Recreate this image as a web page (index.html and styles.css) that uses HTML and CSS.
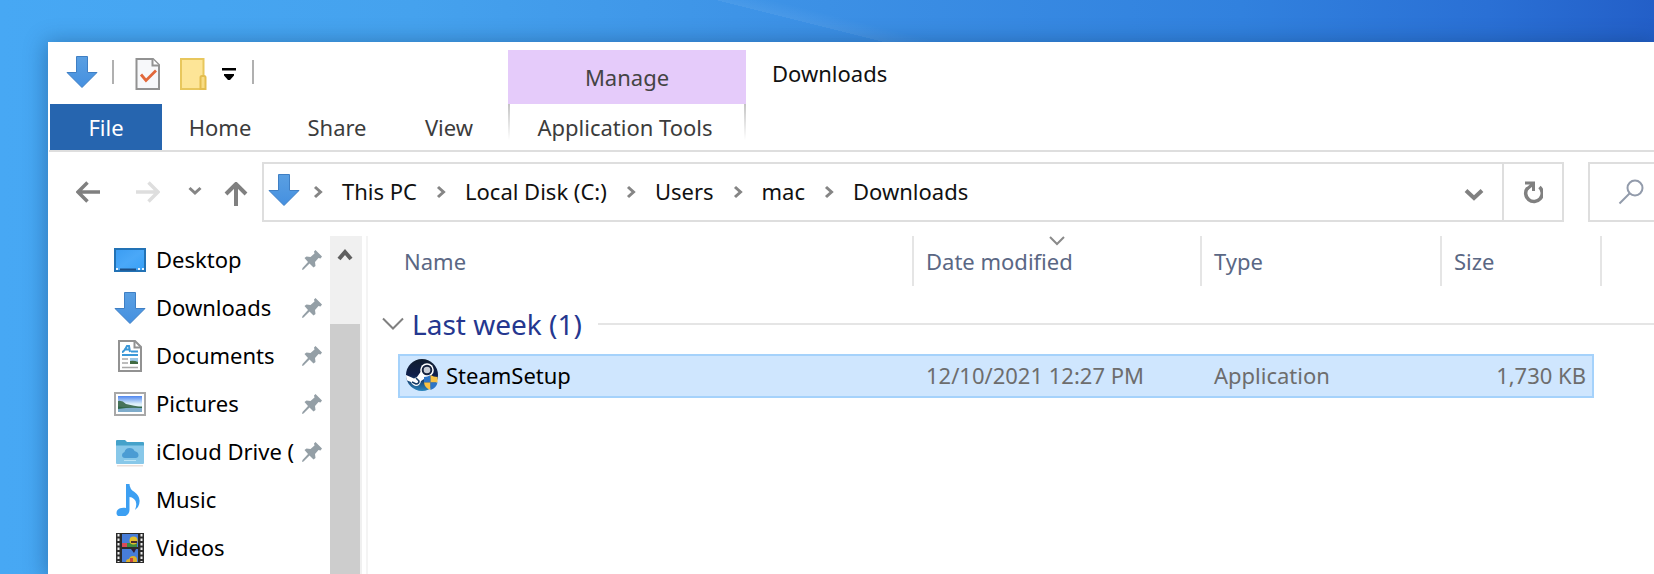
FILE: index.html
```html
<!DOCTYPE html>
<html lang="en">
<head>
<meta charset="utf-8">
<title>Downloads</title>
<link rel="stylesheet" href="styles.css">
</head>
<body>
<svg class="defs" aria-hidden="true">
  <defs>
    <linearGradient id="blue" x1="0" y1="0" x2="0" y2="1"><stop offset="0" stop-color="#5a9fe2"/><stop offset="1" stop-color="#4590e0"/></linearGradient>
    <linearGradient id="screen" x1="0" y1="0" x2="1" y2="1"><stop offset="0" stop-color="#3a9cf2"/><stop offset=".5" stop-color="#4aa8f8"/><stop offset="1" stop-color="#36a0f6"/></linearGradient>
    <linearGradient id="steam" x1="0" y1="0" x2="0" y2="1"><stop offset="0" stop-color="#111d2e"/><stop offset=".5" stop-color="#0f1f4b"/><stop offset="1" stop-color="#2a86bd"/></linearGradient>
    <linearGradient id="sky" x1="0" y1="0" x2="0" y2="1"><stop offset="0" stop-color="#4f86ee"/><stop offset=".5" stop-color="#dff1fb"/></linearGradient>
    <symbol id="down" viewBox="0 0 32 32"><path d="M10.500 .5h11v16h9.500L16 31.500 1 16.500h9.500z" fill="url(#blue)" stroke="#3f7fc4"/></symbol>
    <symbol id="crumb" viewBox="0 0 10 14"><path d="M2 2 7.500 7 2 12" fill="none" stroke="#858585" stroke-width="3"/></symbol>
    <symbol id="pin" viewBox="0 0 22 22"><path d="M14.500 1 21 7.500 19.500 9.500 17.500 9 14 13 14.500 17 12.500 18.500 8.500 14.500 2.500 20.500 1 21 1.500 19 7 13 3.500 9 5.500 7.500 9.500 8 13.500 4.500 13 2.500z" fill="#949fa6"/></symbol>
  </defs>
</svg>
<main class="window">
  <header class="titlebar">
    <div class="ribbon">
      <div class="quick">
        <svg class="icon" viewBox="0 0 32 32"><use href="#down"/></svg>
        <span class="bar"></span>
        <button class="tool" aria-label="Properties"><svg width="26" height="34" viewBox="0 0 26 34"><path d="M1.500 2H18l6 6v24h-22.500z" fill="#f7f8fa" stroke="#929292" stroke-width="2"/><path d="M17.500 2v6.500H24" fill="#fff" stroke="#929292" stroke-width="2"/><path d="m6 17.500 5 6 10-10" fill="none" stroke="#e2683a" stroke-width="2.800"/></svg></button>
        <button class="tool" aria-label="New folder"><svg width="28" height="34" viewBox="0 0 28 34"><path d="M2 2h22.500v30H2z" fill="#fde597" stroke="#e8c75d" stroke-width="2"/><path d="M21.500 32v-11.500q0-1.500 1.500-1.500h2q1.500 0 1.500 1.500v11.500z" fill="#f8dc83" stroke="#e3bd4f" stroke-width="2"/></svg></button>
        <button class="tool more" aria-label="Customize toolbar"><svg width="14" height="12" viewBox="0 0 14 12"><path d="M0 0h14v2.500H0zM2 6h10v1.500L8 12H6L2 7.500z" fill="#000"/></svg></button>
        <span class="bar"></span>
      </div>
      <nav class="tabs">
        <button class="tab file">File</button>
        <button class="tab">Home</button>
        <button class="tab">Share</button>
        <button class="tab">View</button>
      </nav>
    </div>
    <div class="context">
      <div class="manage">Manage</div>
      <button class="tab tools">Application Tools</button>
    </div>
    <h1 class="title">Downloads</h1>
  </header>

  <div class="navbar">
    <div class="history">
      <button class="tool" aria-label="Back"><svg width="24" height="22" viewBox="0 0 24 22"><path d="M24 11H2M11.500 1.500 2 11l9.500 9.500" fill="none" stroke="#808080" stroke-width="3.500"/></svg></button>
      <button class="tool" aria-label="Forward"><svg width="24" height="22" viewBox="0 0 24 22"><path d="M0 11h22M12.500 1.500 22 11l-9.500 9.500" fill="none" stroke="#dedede" stroke-width="3.500"/></svg></button>
      <button class="tool" aria-label="Recent locations"><svg width="14" height="22" viewBox="0 0 14 22"><path d="m1.500 7 5.500 5 5.500-5" fill="none" stroke="#858585" stroke-width="3"/></svg></button>
      <button class="tool" aria-label="Up"><svg width="24" height="24" viewBox="0 0 24 24"><path d="M12 24V2M2 12 12 2l10 10" fill="none" stroke="#808080" stroke-width="4"/></svg></button>
    </div>
    <div class="address">
      <svg class="icon" viewBox="0 0 32 32"><use href="#down"/></svg>
      <nav class="crumbs">
        <svg class="sep"><use href="#crumb"/></svg><a href="#">This PC</a>
        <svg class="sep"><use href="#crumb"/></svg><a href="#">Local Disk (C:)</a>
        <svg class="sep"><use href="#crumb"/></svg><a href="#">Users</a>
        <svg class="sep"><use href="#crumb"/></svg><a href="#">mac</a>
        <svg class="sep"><use href="#crumb"/></svg><a href="#">Downloads</a>
      </nav>
      <button class="tool drop" aria-label="Previous locations"><svg width="20" height="14" viewBox="0 0 20 14"><path d="m2 3.500 8 7.500 8-7.500" fill="none" stroke="#808080" stroke-width="4"/></svg></button>
      <button class="tool refresh" aria-label="Refresh"><svg width="20" height="24" viewBox="0 0 20 24"><path d="M16.500 7a8.300 8.300 0 1 1-12 1" fill="none" stroke="#808080" stroke-width="3.500"/><path d="M2 3H10.500V11M10 4 4 9" fill="none" stroke="#808080" stroke-width="3"/></svg></button>
    </div>
    <label class="search"><svg width="26" height="26" viewBox="0 0 26 26"><circle cx="17" cy="9" r="7.500" fill="none" stroke="#929bab" stroke-width="2"/><path d="M11.500 14.500 1.500 24.500" stroke="#929bab" stroke-width="2"/></svg><input type="text" aria-label="Search Downloads"></label>
  </div>

  <div class="body">
    <aside class="sidebar">
      <ul class="places">
        <li><svg class="icon" viewBox="0 0 32 32"><path d="M1 5h30v22H1z" fill="url(#screen)" stroke="#2272b5" stroke-width="2"/><path d="M6 24.500h16v2H6z" fill="#1e4f85"/><path d="M2 24h2v2H2zM24 24h2v2h-2zM28 24h2v2h-2z" fill="#e8f5ff"/></svg><a href="#">Desktop</a><svg class="pin"><use href="#pin"/></svg></li>
        <li><svg class="icon" viewBox="0 0 32 32"><use href="#down"/></svg><a href="#">Downloads</a><svg class="pin"><use href="#pin"/></svg></li>
        <li><svg class="icon" viewBox="0 0 32 32"><path d="M5 1h16l6 6v24H5z" fill="#fff" stroke="#929292" stroke-width="2"/><path d="M20.500 1v6.500H27" fill="none" stroke="#929292" stroke-width="2"/><path d="M8 12q2 0 5-6h2l1 6M10 9.500h5M17 11.500h7M8 15h16" fill="none" stroke="#3b98d8" stroke-width="2"/><path d="M8 19h6M8 23h6M8 27.500h16" stroke="#a8a8a8" stroke-width="1.500"/><path d="M16 18h8v6h-8z" fill="#9ac6e5"/><path d="M16 21q4-1 8 1v2h-8z" fill="#416b42"/></svg><a href="#">Documents</a><svg class="pin"><use href="#pin"/></svg></li>
        <li><svg class="icon" viewBox="0 0 32 32"><path d="M1 5h30v22H1z" fill="#fff" stroke="#a8a8a8" stroke-width="2"/><path d="M4 8h24v16H4z" fill="url(#sky)"/><path d="M4 13q4-1 8 3 8 2 16 3v1H4z" fill="#47735a"/><path d="M4 18.500q12 2 24 0V21H4z" fill="#2f6648"/><path d="M4 21q12-2 24-1v4H4z" fill="#7faccb"/></svg><a href="#">Pictures</a><svg class="pin"><use href="#pin"/></svg></li>
        <li><svg class="icon" viewBox="0 0 32 32"><path d="M3 29h26v1.500H3z" fill="#eadfda"/><path d="M2 5q0-1 1-1h8l2 2h16q1 0 1 1v7H2z" fill="#45a2ca"/><path d="M2 9.500h28V27q0 1-1 1H3q-1 0-1-1z" fill="#88c8e9"/><path d="M11 22q-3 0-3-3 0-2 2.500-3 1-4 5-4 4 0 5 3 4 1 4 4 0 3-3 3z" fill="#4b9cd3"/><path d="M10 24.500h12" stroke="#bce4f5"/></svg><a href="#">iCloud Drive (</a><svg class="pin"><use href="#pin"/></svg></li>
        <li><svg class="icon" viewBox="0 0 32 32"><path d="M12 0h3.500q0 5 5 8 8 6 3.500 15l-3 3q3-8-1-11-2-2-4.500-2v13c0 8-13 9-13 3 0-5 6-6 9.500-5z" fill="#3c9ff2"/></svg><a href="#">Music</a></li>
        <li><svg class="icon" viewBox="0 0 32 32"><path d="M2 1h28v30H2z" fill="#2c2c2c"/><path d="M8 2h16v13H8zM8 17h16v13H8z" fill="#477dd9"/><path d="M8 11h5l2 4H8z" fill="#d94b58"/><path d="M13 11h10v4H13z" fill="#3d8b3e"/><circle cx="19.500" cy="8.500" r="4" fill="#e2be2c"/><path d="M17 9h6v2h-6z" fill="#472c2f"/><path d="M17 17h5l-2 4z" fill="#331d35"/><path d="M12 30q0-3 3-3 1-3 4-3 4 0 4 4v2z" fill="#ddb02b"/><path d="M16 26h3v4h-3z" fill="#c84641"/><path d="M4.500 2v28M27.500 2v28" stroke="#eee" stroke-width="2" stroke-dasharray="2.500 2"/></svg><a href="#">Videos</a></li>
      </ul>
      <div class="scroll">
        <button class="tool up" aria-label="Scroll up"><svg width="16" height="14" viewBox="0 0 16 14"><path d="m2 12 6-7 6 7" fill="none" stroke="#606060" stroke-width="4"/></svg></button>
        <div class="thumb"></div>
      </div>
    </aside>
    <section class="files">
      <table>
        <colgroup><col class="c-pad"><col class="c-name"><col class="c-date"><col class="c-type"><col class="c-size"><col class="c-end"><col></colgroup>
        <thead>
          <tr><td></td><th>Name</th><th>Date modified<svg class="sort" viewBox="0 0 16 10"><path d="m1 1 7 7 7-7" fill="none" stroke="#8a8a8a" stroke-width="2"/></svg></th><th>Type</th><th colspan="2">Size</th><td></td></tr>
        </thead>
        <tbody>
          <tr class="group"><td colspan="7"><div class="group-row"><svg width="24" height="14" viewBox="0 0 24 14"><path d="m2 1.500 10 10 10-10" fill="none" stroke="#808080" stroke-width="2"/></svg><h2>Last week (1)</h2><span class="rule"></span></div></td></tr>
          <tr class="file-row"><td class="blank"></td>
            <td><div class="file-name"><svg class="icon" viewBox="0 0 32 32"><clipPath id="disc"><circle cx="16" cy="16" r="16"/></clipPath><g clip-path="url(#disc)"><path d="M0 0h32v32H0z" fill="url(#steam)"/><path d="M0 16 8 19.500 11 18 16 11 24 16 15 22q-1 5-5 5-4-1-5-4L0 21z" fill="#fff"/><circle cx="21" cy="11" r="6.800" fill="#fff"/><circle cx="21" cy="11" r="4.300" fill="#c9ced6" stroke="#17233f" stroke-width="2"/><path d="m6 23 4 2q3 0 3-3l-3-3" fill="none" stroke="#153b66" stroke-width="1.500"/></g><path d="M18 18q4 0 6.500-2v7.500H18z" fill="#2d75c7"/><path d="M24.500 16q3 2 7 2v5.500h-7z" fill="#f9c242"/><path d="M18 23.500h6.500V31q-6-2-6.500-7.500z" fill="#f9c242"/><path d="M24.500 23.500h7q-1 5.500-7 7.500z" fill="#2d75c7"/></svg><a href="#">SteamSetup</a></div></td>
            <td>12/10/2021 12:27 PM</td><td>Application</td><td class="size">1,730 KB</td><td class="blank"></td><td class="blank"></td></tr>
        </tbody>
      </table>
    </section>
  </div>
</main>
</body>
</html>
```
FILE: styles.css
```css
* { box-sizing: border-box; }

body {
  margin: 0;
  height: 100vh;
  padding: 42px 0 0 48px;
  overflow: hidden;
  color: #111;
  font: 22px/30px "Noto Sans", "Open Sans", sans-serif;
  background:
    linear-gradient(14deg, transparent 50%, #ffffff10 50%, transparent 60%) 600px 0 / 400px 42px no-repeat,
    linear-gradient(90deg, #47a8f4 0, #45a2ee 25%, #3c90e5 50%, #3181de 75%, #2a70d5 90%, #235fc8 100%);
}

.defs { position: absolute; width: 0; height: 0; }
svg { display: block; flex: none; }
a { color: inherit; text-decoration: none; }
button { margin: 0; padding: 0; border: 0; background: none; font: inherit; color: inherit; }
h1, h2 { margin: 0; font-weight: 400; }
.icon { width: 32px; height: 32px; }
.tool { display: flex; align-items: center; justify-content: center; }

.window {
  display: flex;
  flex-direction: column;
  height: 100%;
  padding-left: 1px;
  background: #fff;
  box-shadow: 0 2px 20px 2px #0a305a60;
}

/* Title bar and ribbon */
.titlebar { display: flex; flex: none; border-bottom: 2px solid #dedede; }
.quick { display: flex; align-items: center; height: 62px; padding: 0 0 2px 17px; }
.bar { width: 2px; height: 24px; margin-left: 14px; background: #b0b0b0; }
.quick .tool { margin-top: 4px; margin-left: 18px; }
.quick .bar + .tool { margin-left: 21px; }
.quick .more { margin-left: 15px; }
.quick .more + .bar { margin-left: 16px; }
.tabs { display: grid; grid-template-columns: 112px 116px 118px 106px; padding: 0 6px 0 1px; }
.tab { height: 46px; color: #3c3c3c; text-align: center; }
.file { color: #fff; background: #2665af; }
.context { width: 238px; padding-top: 8px; }
.manage { height: 54px; line-height: 54px; text-align: center; color: #444; background: #e5cbfa; }
.tools {
  width: 100%;
  padding-right: 4px;
  background:
    linear-gradient(#c4c4c4, #fff) left top / 2px 36px no-repeat,
    linear-gradient(#c4c4c4, #fff) right top / 2px 36px no-repeat;
}
.title { padding: 16px 26px; font-size: 22px; line-height: 30px; }

/* Navigation row */
.navbar { display: flex; flex: none; height: 84px; padding: 10px 0 14px 27px; }
.history { display: flex; align-items: center; width: 186px; }
.history .tool + .tool { margin-left: 36px; }
.history .tool + .tool + .tool { margin-left: 28px; }
.history .tool + .tool + .tool + .tool { margin: 4px 0 0 22px; }
.address { display: flex; flex: 1; align-items: center; height: 60px; padding-left: 4px; border: 2px solid #dedede; }
.address > .icon { margin-bottom: 4px; }
.crumbs { display: flex; flex: 1; align-items: center; gap: 19px; padding-left: 13px; white-space: nowrap; }
.crumbs a { padding-bottom: 2px; }
.sep { width: 10px; height: 14px; }
.drop { width: 56px; height: 100%; padding-top: 4px; }
.refresh { width: 60px; height: 100%; border-left: 2px solid #dedede; }
.search { display: flex; align-items: center; width: 66px; height: 60px; margin-left: 24px; padding: 0 0 0 28px; border: 2px solid #dedede; border-right: 0; }
.search input { width: 0; flex: 1; min-width: 0; padding: 0; border: 0; font: inherit; outline: 0; }

/* Sidebar */
.body { display: flex; flex: 1; min-height: 0; overflow: hidden; }
.sidebar { display: flex; width: 319px; border-right: 2px solid #f4f4f4; }
.places { flex: 1; margin: 0; padding: 0 7px 0 65px; list-style: none; min-width: 0; color: #000; }
.places li { display: flex; align-items: center; height: 48px; }
.places a { flex: 1; min-width: 0; margin-left: 10px; padding-bottom: 2px; overflow: hidden; white-space: nowrap; }
.pin { width: 22px; height: 22px; margin-left: 5px; }
.scroll { width: 32px; margin-right: 4px; background: #f0f0f0; }
.up { width: 30px; height: 36px; }
.thumb { width: 30px; height: 100%; margin-top: 52px; background: #cdcdcd; }

/* File list */
.files { flex: 1; min-width: 0; }
table { width: 100%; table-layout: fixed; border-spacing: 0; }
.c-pad { width: 30px; }
.c-name { width: 516px; }
.c-date { width: 288px; }
.c-type { width: 240px; }
.c-size { width: 152px; }
.c-end { width: 8px; }
td, th { padding: 0; text-align: left; font-weight: 400; white-space: nowrap; }
th { position: relative; height: 50px; padding-left: 12px; color: #5a6784; border-right: 2px solid #e5e5e5; }
th:nth-child(2) { padding-left: 6px; }
.sort { position: absolute; top: 0; left: 0; right: 0; width: 16px; height: 10px; margin: 0 auto; }
.group td { height: 68px; padding-top: 7px; }
.group-row { display: flex; align-items: center; padding-left: 13px; }
.group-row h2 { margin: 0 16px 0 7px; font-size: 28px; line-height: 36px; color: #25378f; }
.rule { flex: 1; height: 2px; background: #e5e5e5; }
.file-row td { height: 44px; padding: 0 0 2px 12px; color: #6d6d6d; background: #cfe6fe; border: 2px solid #a5d2fb; border-width: 2px 0; }
.file-row td:nth-child(2) { padding-left: 6px; border-left-width: 2px; }
.file-row .size { padding-right: 6px; text-align: right; border-right-width: 2px; }
.file-row .blank { padding: 0; background: none; border: 0; }
.file-name { display: flex; align-items: center; gap: 8px; color: #000; }
```
